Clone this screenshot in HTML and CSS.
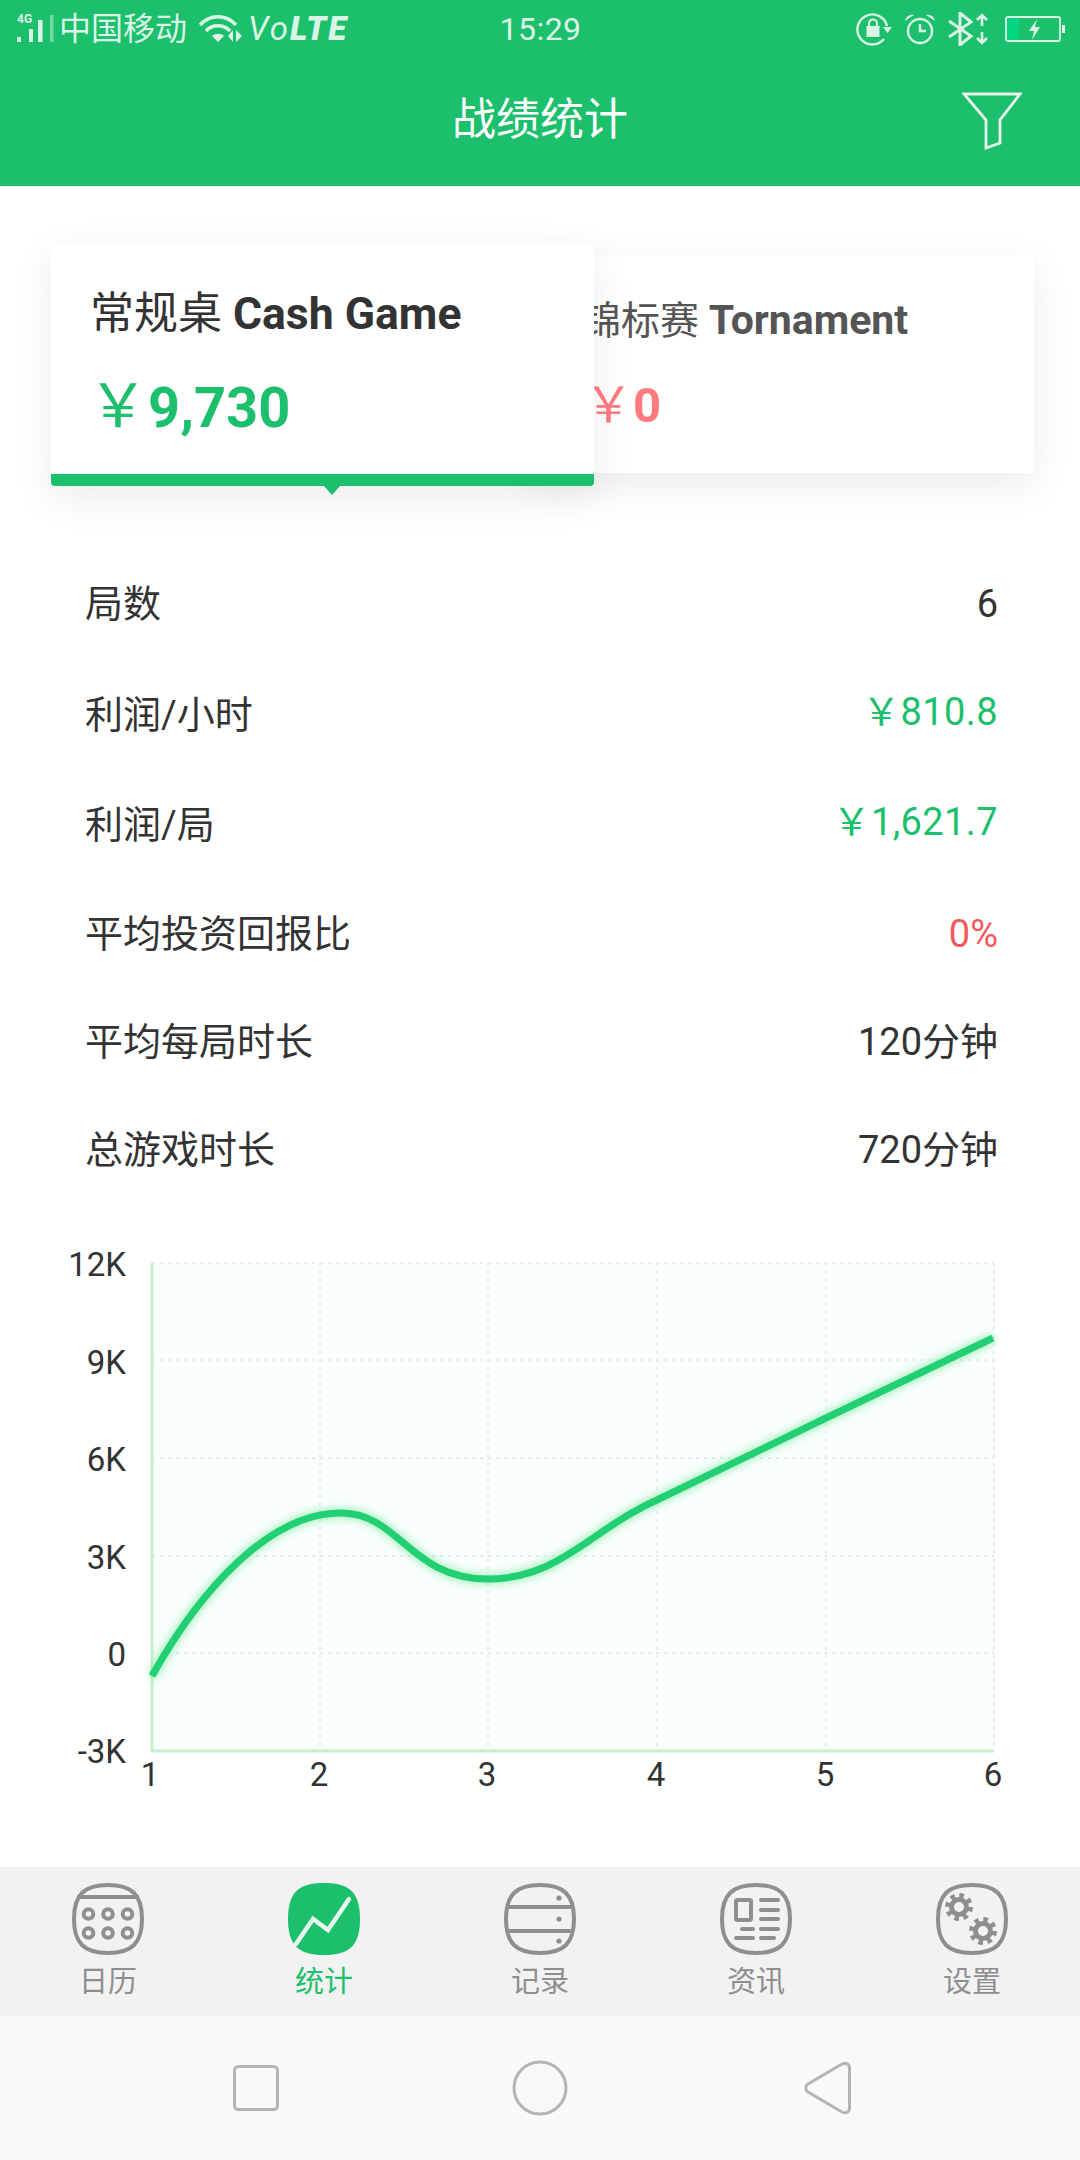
FILE: index.html
```html
<!DOCTYPE html>
<html lang="zh">
<head>
<meta charset="utf-8">
<title>战绩统计</title>
<link rel="stylesheet" href="styles.css">
</head>
<body>
<div class="app">
  <header class="header">
    <div class="status">
      <div class="status-left">
        <div class="signal">
          <span class="net">4G</span>
          <svg class="signal-bars" width="38" height="28" viewBox="16 13 38 28"><rect x="17" y="35" width="4" height="5"/><rect x="29" y="27" width="4" height="13"/><rect x="38" y="18" width="4.5" height="22"/><rect class="dim" x="50" y="13" width="3.5" height="27"/></svg>
        </div>
        <span class="carrier">中国移动</span>
        <svg class="wifi" width="44" height="28" viewBox="200 13 44 28"><g fill="none" stroke="#d9f5e6" stroke-width="3.6"><path d="M201 23C211 12 227 12 237 23"/><path d="M207 29C213 22 225 22 231 29"/></g><path d="M213 34C216 31 222 31 225 34L219 40Z" fill="#d9f5e6"/><path d="M234 28V40L229 34ZM237 28L243 34 237 40Z" fill="#d9f5e6"/></svg>
        <span class="volte">Vo<b>LTE</b></span>
      </div>
      <span class="clock">15:29</span>
      <div class="status-right">
        <svg width="36" height="34" viewBox="0 0 36 34" class="lock"><path d="M28 27A15 15 0 1 1 31 14" fill="none" stroke="#d9f5e6" stroke-width="2.4"/><path d="M27 15H36L31.500 21Z" fill="#d9f5e6"/><rect x="10.500" y="14" width="13" height="11" fill="#d9f5e6"/><path d="M13 15V11.500A4 4 0 0 1 21 11.500V15" fill="none" stroke="#d9f5e6" stroke-width="2.200"/></svg>
        <svg width="32" height="32" viewBox="0 0 32 32" class="alarm"><circle cx="16" cy="18" r="12" fill="none" stroke="#d9f5e6" stroke-width="2.400"/><path d="M16 11V18H22" fill="none" stroke="#d9f5e6" stroke-width="2.400"/><path d="M1 8C2 3 6 1 10 2ZM31 8C30 3 26 1 22 2Z" fill="#d9f5e6"/></svg>
        <svg width="42" height="34" viewBox="0 0 42 34" class="bt"><path d="M1 9L23 24 12 33V1L23 10 1 25" fill="none" stroke="#d9f5e6" stroke-width="3"/><path d="M34 3V14M29 8L34 3 39 8M34 20V31M29 26L34 31 39 26" fill="none" stroke="#d9f5e6" stroke-width="2.600"/></svg>
        <svg width="60" height="26" viewBox="0 0 60 26" class="battery"><rect x="1" y="1" width="54" height="24" rx="2" fill="none" stroke="#d9f5e6" stroke-width="1.800"/><rect x="2" y="2" width="12" height="22" fill="#02d680"/><rect x="57" y="9" width="3" height="8" fill="#d9f5e6"/><path d="M32 3L24 15H29L27 24 35 11H30Z" fill="#d9f5e6"/></svg>
      </div>
    </div>
    <div class="topbar">
      <h1 class="title">战绩统计</h1>
      <svg class="filter" width="60" height="58" viewBox="0 0 60 58"><path d="M2 2H58L38 28V51L24 56V28Z" fill="none" stroke="#e4f8ec" stroke-width="2.800"/></svg>
    </div>
  </header>

  <section class="cards">
    <div class="card card-active">
      <div class="card-title">常规桌 <b>Cash Game</b></div>
      <div class="card-value value-green"><span class="yen">￥</span>9,730</div>
      <span class="pointer"></span>
    </div>
    <div class="card card-back">
      <div class="card-title">锦标赛 <b>Tornament</b></div>
      <div class="card-value value-red"><span class="yen">￥</span>0</div>
    </div>
  </section>

  <section class="stats">
    <div class="row"><span>局数</span><span class="val">6</span></div>
    <div class="row"><span>利润/小时</span><span class="val green">￥810.8</span></div>
    <div class="row"><span>利润/局</span><span class="val green">￥1,621.7</span></div>
    <div class="row"><span>平均投资回报比</span><span class="val red">0%</span></div>
    <div class="row"><span>平均每局时长</span><span class="val">120分钟</span></div>
    <div class="row"><span>总游戏时长</span><span class="val">720分钟</span></div>
  </section>

  <section class="chart">
    <svg class="chart-svg" width="1080" height="663" viewBox="0 1204 1080 663">
      <rect class="plot" x="152" y="1263" width="842" height="488"/>
      <g class="grid">
        <path d="M152 1263H994M152 1360H994M152 1458H994M152 1556H994M152 1653H994"/>
        <path d="M320 1263V1751M488 1263V1751M657 1263V1751M826 1263V1751M994 1263V1751"/>
      </g>
      <path class="axis" d="M152 1263V1751H994"/>
      <path class="curve" d="M152 1676C200 1590 270 1512 342 1513C400 1514 410 1579 488 1579C560 1579 590 1530 657 1500L826 1418L993 1338"/>
      <g class="ylabels">
        <text x="126" y="1276">12K</text>
        <text x="126" y="1374">9K</text>
        <text x="126" y="1471">6K</text>
        <text x="126" y="1569">3K</text>
        <text x="126" y="1666">0</text>
        <text x="126" y="1763">-3K</text>
      </g>
      <g class="xlabels">
        <text x="150" y="1786">1</text>
        <text x="319" y="1786">2</text>
        <text x="487" y="1786">3</text>
        <text x="656" y="1786">4</text>
        <text x="825" y="1786">5</text>
        <text x="993" y="1786">6</text>
      </g>
    </svg>
  </section>

  <nav class="tabs">
    <div class="tab">
      <svg class="tab-icon" width="72" height="72" viewBox="0 0 72 72"><path class="sq" d="M36 2C60 2 70 12 70 36C70 60 60 70 36 70C12 70 2 60 2 36C2 12 12 2 36 2Z"/><path class="ln" d="M5 14H67"/><g class="ring"><circle cx="16.500" cy="31" r="4.800"/><circle cx="36" cy="31" r="4.800"/><circle cx="55.500" cy="31" r="4.800"/><circle cx="16.500" cy="50" r="4.800"/><circle cx="36" cy="50" r="4.800"/><circle cx="55.500" cy="50" r="4.800"/></g></svg>
      <span class="tab-label">日历</span>
    </div>
    <div class="tab tab-on">
      <svg class="tab-icon" width="72" height="72" viewBox="0 0 72 72"><path class="sq-on" d="M36 0C62 0 72 10 72 36C72 62 62 72 36 72C10 72 0 62 0 36C0 10 10 0 36 0Z"/><path class="spark" d="M8 61L25 36L40 47L61 16"/></svg>
      <span class="tab-label">统计</span>
    </div>
    <div class="tab">
      <svg class="tab-icon" width="72" height="72" viewBox="0 0 72 72"><path class="sq" d="M36 2C60 2 70 12 70 36C70 60 60 70 36 70C12 70 2 60 2 36C2 12 12 2 36 2Z"/><path class="ln" d="M3 24H69M3 48H69"/><g class="dot"><circle cx="55" cy="15" r="2.600"/><circle cx="55" cy="36" r="2.600"/><circle cx="55" cy="58" r="2.600"/></g></svg>
      <span class="tab-label">记录</span>
    </div>
    <div class="tab">
      <svg class="tab-icon" width="72" height="72" viewBox="0 0 72 72"><path class="sq" d="M36 2C60 2 70 12 70 36C70 60 60 70 36 70C12 70 2 60 2 36C2 12 12 2 36 2Z"/><rect class="box" x="16" y="17" width="15" height="20" rx="1.500"/><path class="rl" d="M41 17H58M41 27H58M41 36H58M41 46H58M41 55H54M22 46H33M16 55H33"/></svg>
      <span class="tab-label">资讯</span>
    </div>
    <div class="tab">
      <svg class="tab-icon" width="72" height="72" viewBox="0 0 72 72"><path class="sq" d="M36 2C60 2 70 12 70 36C70 60 60 70 36 70C12 70 2 60 2 36C2 12 12 2 36 2Z"/><g class="gear"><circle class="g-ring" cx="23" cy="24" r="7.500"/><circle class="g-teeth" cx="23" cy="24" r="11.500"/><circle class="g-ring" cx="47" cy="48" r="7.500"/><circle class="g-teeth" cx="47" cy="48" r="11.500"/></g></svg>
      <span class="tab-label">设置</span>
    </div>
  </nav>

  <div class="sysnav">
    <svg width="46" height="46" viewBox="0 0 46 46"><rect class="sys" x="1.500" y="1.500" width="43" height="43" rx="4"/></svg>
    <svg width="56" height="56" viewBox="0 0 56 56"><circle class="sys" cx="28" cy="28" r="26"/></svg>
    <svg class="sys-back" width="48" height="54" viewBox="0 0 48 54"><path class="sys" d="M4 23L38 3C42 1 45.500 3 45.500 7V47C45.500 51 42 53 38 51L4 31C1 29 1 25 4 23Z"/></svg>
  </div>
</div>
</body>
</html>
```
FILE: styles.css
```css
* { box-sizing: border-box; margin: 0; padding: 0; }
html, body { width: 1080px; height: 2160px; overflow: hidden; background: #fff; }
body { font-family: Roboto, "Noto Sans CJK SC", sans-serif; color: #333; }
.app { width: 1080px; height: 2160px; display: flex; flex-direction: column; }

.header { height: 186px; background: #1cbf6c; flex: none; }
.status { height: 60px; padding: 0 15px 2px 16px; display: grid; grid-template-columns: 1fr auto 1fr; align-items: center; color: #d9f5e6; }
.status-left { display: flex; align-items: center; }
.signal { position: relative; width: 38px; height: 28px; margin-right: 5px; }
.net { position: absolute; left: 1px; top: -2px; font-size: 12px; line-height: 12px; font-weight: 700; }
.signal-bars rect { fill: #d9f5e6; }
.signal-bars .dim { opacity: .45; }
.carrier { font-size: 32px; line-height: 40px; width: 140px; }
.volte { margin-left: 5px; font-size: 33px; line-height: 40px; font-style: italic; letter-spacing: 2px; }
.volte b { font-weight: 900; }
.clock { font-size: 32px; line-height: 40px; letter-spacing: .5px; }
.status-right { display: flex; justify-content: flex-end; align-items: center; gap: 12px; }
.status-right .bt { margin-right: 3px; }
.topbar { height: 126px; padding: 0 58px 6px 0; position: relative; display: flex; align-items: center; justify-content: flex-end; }
.title { position: absolute; left: 0; right: 0; top: 31px; text-align: center; font-size: 44px; line-height: 58px; font-weight: 400; color: #fff; }
.filter { display: block; margin-top: 1px; }

.cards { height: 362px; padding: 57px 46px 0 51px; display: flex; align-items: flex-start; flex: none; }
.card { background: #fff; border-radius: 4px; box-shadow: 0 12px 40px rgba(0,0,0,.08); }
.card-active { position: relative; z-index: 2; width: 543px; height: 243px; padding: 44px 0 0 39px; border-bottom: 12px solid #1cbf6c; }
.card-back { width: 500px; height: 218px; margin: 12px 0 0 -60px; padding: 38px 0 0 48px; color: #555; }
.card-title { font-size: 44px; line-height: 54px; }
.card-active .card-title b { font-size: 44.5px; }
.card-back .card-title { font-size: 39px; }
.card-back .card-title b { font-size: 41px; }
.card-title b { font-weight: 700; }
.card-value { margin-top: 30px; font-size: 56px; line-height: 72px; font-weight: 700; }
.card-active .yen { font-size: 60px; margin-left: -2px; }
.card-back .card-value { margin: 26px 0 0 2px; font-size: 49px; line-height: 64px; }
.yen { font-weight: 400; }
.value-green { color: #1cbf6c; }
.value-red { color: #ff7b80; }
.pointer { position: absolute; left: 273px; top: 243px; border-style: solid; border-width: 9px 8px 0; border-color: #1cbf6c transparent transparent; }

.stats { display: grid; grid-template-rows: 112px 110px 110px 108px 108px 108px; padding: 0 82px 0 85px; flex: none; }
.row { display: flex; justify-content: space-between; align-items: center; font-size: 38px; line-height: 44px; color: #333; }
.val { font-size: 38px; }
.green { color: #1cbf6c; margin-top: -6px; letter-spacing: .4px; }
.red { color: #f5595c; }

.chart { height: 663px; flex: none; }
.chart-svg { display: block; }
.plot { fill: #f8fefc; }
.grid path { fill: none; stroke: #e3eeea; stroke-width: 2; stroke-dasharray: 3 5; }
.axis { fill: none; stroke: #c6f0c9; stroke-width: 3; }
.curve { fill: none; stroke: #22cf73; stroke-width: 7; filter: drop-shadow(0 0 5px rgba(70,225,120,.7)); }
.ylabels text { font-size: 33px; fill: #333; text-anchor: end; }
.xlabels text { font-size: 33px; fill: #333; text-anchor: middle; }

.tabs { height: 149px; background: #f2f2f2; display: grid; grid-template-columns: repeat(5, 216px); flex: none; }
.tab { display: flex; flex-direction: column; align-items: center; padding-top: 16px; color: #8e8e8e; }
.tab-on { color: #1cbf6c; }
.tab-icon { display: block; }
.tab-label { margin-top: 7px; font-size: 29px; line-height: 40px; }
.sq { fill: none; stroke: #8f8f8f; stroke-width: 4; }
.ln { fill: none; stroke: #8f8f8f; stroke-width: 4; }
.ring circle { fill: none; stroke: #8f8f8f; stroke-width: 4; }
.dot circle { fill: #8f8f8f; }
.sq-on { fill: #1cbf6c; }
.spark { fill: none; stroke: #e6f8ee; stroke-width: 4.5; stroke-linecap: round; stroke-linejoin: miter; }
.box { fill: none; stroke: #8f8f8f; stroke-width: 4; }
.rl { fill: none; stroke: #8f8f8f; stroke-width: 4; stroke-linecap: round; }
.g-ring { fill: none; stroke: #8f8f8f; stroke-width: 5; }
.g-teeth { fill: none; stroke: #8f8f8f; stroke-width: 5; stroke-dasharray: 4.5 4.53; }

.sysnav { height: 144px; background: #f9f9f9; flex: none; display: flex; align-items: center; gap: 233px; padding-left: 233px; }
.sysnav svg { display: block; flex: none; }
.sys-back { margin-left: 3px; }
.sys { fill: none; stroke: #b4b4b4; stroke-width: 3; }
```
